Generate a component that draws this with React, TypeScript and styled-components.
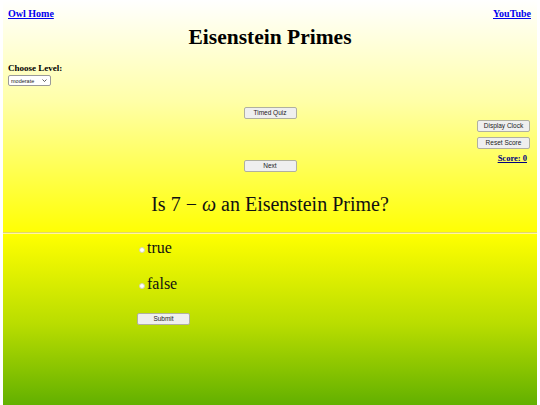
import React, { useState } from "react";
import styled, { createGlobalStyle } from "styled-components";

const GlobalStyle = createGlobalStyle`
  html, body {
    margin: 0;
    padding: 0;
    background: #ffffff;
  }
  body {
    padding: 0 3px;
    font-family: "Liberation Serif", "Times New Roman", serif;
  }
`;

function App() {
  const [level, setLevel] = useState("moderate");
  const [answer, setAnswer] = useState("");

  return (
    <>
      <GlobalStyle />
      <Page>
        <TopBar>
          <NavLink href="#">Owl Home</NavLink>
          <NavLink href="#">YouTube</NavLink>
        </TopBar>
        <Title>Eisenstein Primes</Title>

        <LevelBox>
          <LevelLabel>Choose Level:</LevelLabel>
          <SelectWrap>
            <LevelSelect value={level} onChange={(e) => setLevel(e.target.value)}>
              <option value="easy">easy</option>
              <option value="moderate">moderate</option>
              <option value="hard">hard</option>
            </LevelSelect>
            <Chevron viewBox="0 0 10 6" aria-hidden="true">
              <path d="M1 1l4 4 4-4" fill="none" stroke="#333" strokeWidth="1.6" />
            </Chevron>
          </SelectWrap>
        </LevelBox>

        <Controls>
          <span />
          <CenterCol>
            <QuizButton>Timed Quiz</QuizButton>
            <QuizButton>Next</QuizButton>
          </CenterCol>
          <RightCol>
            <QuizButton>Display Clock</QuizButton>
            <QuizButton>Reset Score</QuizButton>
            <Score href="#">Score: 0</Score>
          </RightCol>
        </Controls>

        <Question>
          Is 7 − <i>ω</i> an Eisenstein Prime?
        </Question>
        <Divider />

        <Answers>
          <Option>
            <Radio
              type="radio"
              name="ans"
              checked={answer === "true"}
              onChange={() => setAnswer("true")}
            />
            true
          </Option>
          <Option>
            <Radio
              type="radio"
              name="ans"
              checked={answer === "false"}
              onChange={() => setAnswer("false")}
            />
            false
          </Option>
          <SubmitRow>
            <QuizButton>Submit</QuizButton>
          </SubmitRow>
        </Answers>
      </Page>
    </>
  );
}

export default App;

const Page = styled.div`
  height: 405px;
  background: linear-gradient(
    to bottom,
    #ffffff 0%,
    #ffffa8 25%,
    #ffff00 58%,
    #b9dd00 80%,
    #62b000 100%
  );
  overflow: hidden;
`;

const TopBar = styled.div`
  display: flex;
  justify-content: space-between;
  padding: 8px 6px 0 5px;
`;

const NavLink = styled.a`
  color: #0000ee;
  font-size: 10px;
  font-weight: 700;
  line-height: 12px;
  text-decoration: underline;
`;

const Title = styled.h1`
  margin: 4px 0 0;
  text-align: center;
  font-size: 21.5px;
  line-height: 26px;
  font-weight: 700;
  color: #000;
`;

const LevelBox = styled.div`
  display: flex;
  flex-direction: column;
  align-items: flex-start;
  padding: 13px 0 0 5px;
`;

const LevelLabel = styled.label`
  font-size: 9px;
  font-weight: 700;
  line-height: 11px;
`;

const SelectWrap = styled.div`
  position: relative;
  margin-top: 1px;
`;

const LevelSelect = styled.select`
  appearance: none;
  display: block;
  width: 43px;
  height: 11px;
  padding: 0 0 0 2px;
  font-family: "Liberation Sans", Arial, sans-serif;
  font-size: 5.5px;
  color: #222;
  border: 1px solid #9a9a9a;
  border-radius: 2px;
  background: #fff;
`;

const Chevron = styled.svg`
  position: absolute;
  right: 4px;
  top: 4px;
  width: 5px;
  height: 3px;
  pointer-events: none;
`;

const Controls = styled.div`
  display: grid;
  grid-template-columns: 1fr auto 1fr;
  margin-top: 21px;
`;

const CenterCol = styled.div`
  display: flex;
  flex-direction: column;
  gap: 41px;
`;

const RightCol = styled.div`
  display: flex;
  flex-direction: column;
  align-items: flex-end;
  gap: 5px;
  padding: 13px 7px 0 0;
`;

const QuizButton = styled.button`
  width: 53px;
  height: 12px;
  padding: 0;
  font-family: "Liberation Sans", Arial, sans-serif;
  font-size: 6.5px;
  line-height: 10px;
  color: #222;
  background: #efefef;
  border: 1px solid #b0b0a0;
  border-radius: 2px;
`;

const Score = styled.a`
  margin: 0 3px 0 0;
  color: #000080;
  font-size: 8.5px;
  font-weight: 700;
  line-height: 9px;
  text-decoration: underline;
`;

const Question = styled.p`
  margin: 20px 0 0;
  text-align: center;
  font-size: 20px;
  line-height: 24px;
  color: #111;
`;

const Divider = styled.hr`
  margin: 16px 0 0;
  border: 0;
  border-top: 1px solid #e2d66a;
  border-bottom: 1px solid #fff6a0;
  height: 0;
`;

const Answers = styled.div`
  display: flex;
  flex-direction: column;
  padding: 5px 0 0 134px;
`;

const Option = styled.label`
  display: flex;
  align-items: center;
  height: 18px;
  margin-bottom: 18px;
  font-size: 16px;
  color: #111;
`;

const Radio = styled.input`
  appearance: none;
  width: 6px;
  height: 6px;
  margin: 4px 2px 0 2px;
  border-radius: 50%;
  background: #fff;
  border: 1px solid #d4d4b0;
`;

const SubmitRow = styled.div`
  margin-top: -4px;
`;
